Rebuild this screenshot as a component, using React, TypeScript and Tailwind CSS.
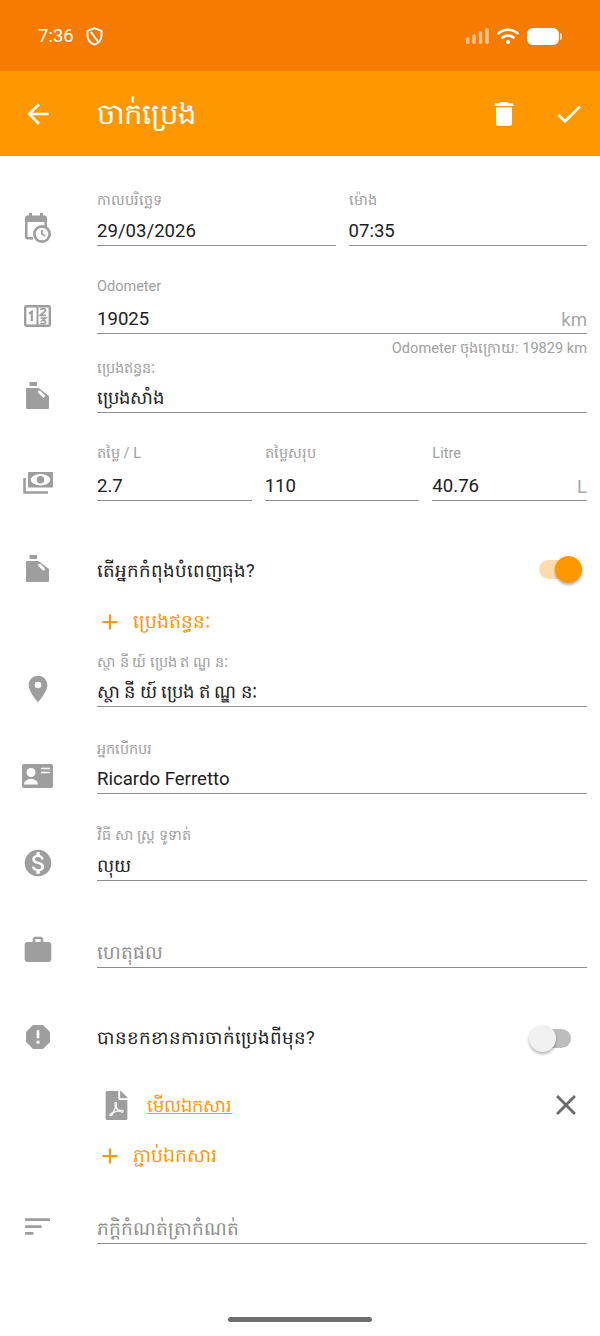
import { ReactNode } from 'react'
import { FaFilePdf } from 'react-icons/fa'
import {
  MdAdd,
  MdArrowBack,
  MdCheck,
  MdClose,
  MdDelete,
  MdMonetizationOn,
  MdPlace,
  MdReport,
  MdSort,
  MdWork,
} from 'react-icons/md'

const FONT = "font-['Roboto','Noto_Sans',sans-serif]"

function OilIcon() {
  return (
    <svg width="23" height="27" viewBox="0 0 23 27" fill="#9e9e9e">
      <rect x="3.500" y="0" width="7.500" height="4" />
      <path d="M1 6h11.500l10.500 8v12c0 .6-.4 1-1 1H1c-.6 0-1-.4-1-1V7c0-.6.4-1 1-1z" />
      <path d="M13.500 10l4 4" stroke="#fff" strokeWidth="3" strokeLinecap="round" />
    </svg>
  )
}

function CalendarClockIcon() {
  return (
    <svg width="27" height="30" viewBox="0 0 27 30">
      <path
        fill="#9e9e9e"
        d="M5 0h3v2.500h8V0h3v2.500h1.500C21.900 2.500 23 3.600 23 5v10h-2.500V9h-17v15H9v2.500H3.500C2.100 26.500 1 25.400 1 24V5c0-1.400 1.100-2.500 2.500-2.500H5z"
      />
      <circle cx="18" cy="21" r="9" fill="#9e9e9e" />
      <circle cx="18" cy="21" r="6.300" fill="#fff" />
      <path d="M17 17h1.800v3.700l2.800 1.700-.9 1.400-3.700-2.300z" fill="#9e9e9e" />
    </svg>
  )
}

function OdometerIcon() {
  return (
    <svg width="27" height="22" viewBox="0 0 27 22" fill="none" stroke="#9e9e9e">
      <rect x="1.200" y="1.200" width="24.600" height="19.600" rx="1.500" strokeWidth="2.400" />
      <path d="M13.500 1v20" strokeWidth="2" />
      <path d="M5 8.500l2.800-1.800V16" strokeWidth="2.200" />
      <path d="M16.500 5c.5-2 5-2 5 .3 0 1.700-3.500 3-5 5h5.500" strokeWidth="1.700" />
      <path d="M16.500 13h5l-3 2.500c2.500-.3 3.500 1 3 2.200-.5 1.300-3.800 1.300-5 .3" strokeWidth="1.700" />
    </svg>
  )
}

function MoneyIcon() {
  return (
    <svg width="30" height="22" viewBox="0 0 30 22">
      <rect x="5" y="0" width="25" height="15.500" fill="#9e9e9e" />
      <ellipse cx="17.500" cy="7.700" rx="9.800" ry="5.700" fill="#fff" />
      <circle cx="17.500" cy="7.700" r="3.800" fill="#9e9e9e" />
      <path d="M1.500 6v14.500H25" fill="none" stroke="#9e9e9e" strokeWidth="2.600" />
    </svg>
  )
}

function DriverIcon() {
  return (
    <svg width="31" height="24" viewBox="0 0 31 24">
      <rect x="0" y="0" width="31" height="24" rx="2" fill="#9e9e9e" />
      <circle cx="9" cy="8.500" r="4.500" fill="#fff" />
      <path d="M2 20.500c0-3.800 4-5.500 7-5.500s7 1.700 7 5.500z" fill="#fff" />
      <path d="M19 4.500h9M19 8.500h9" stroke="#fff" strokeWidth="1.600" />
    </svg>
  )
}

function StatusIcons() {
  return (
    <div className="flex items-center gap-[8px]">
      <svg width="23" height="16" viewBox="0 0 23 16" fill="#ffc48a">
        <rect x="0" y="9" width="3.500" height="7" rx="1.700" />
        <rect x="6.300" y="6" width="3.500" height="10" rx="1.700" />
        <rect x="12.800" y="3" width="3.500" height="13" rx="1.700" />
        <rect x="19.300" y="0" width="3.500" height="16" rx="1.700" />
      </svg>
      <svg width="22" height="16" viewBox="0 0 22 16" fill="none" stroke="#fff" strokeWidth="2.600" strokeLinecap="round">
        <path d="M1.500 5.300c5.500-4.800 13.500-4.800 19 0" />
        <path d="M5.500 9.600c3.200-2.700 7.800-2.700 11 0" />
        <circle cx="11" cy="14" r="2" fill="#fff" stroke="none" />
      </svg>
      <div className="flex items-center">
        <div className="w-[32px] h-[17px] rounded-[6px] bg-white" />
        <div className="w-[2px] h-[7px] ml-[1px] rounded-r-sm bg-[#ffd9b3]" />
      </div>
    </div>
  )
}

type FieldProps = {
  label?: string
  value?: string
  placeholder?: string
  suffix?: string
  labelGap?: string
  valueSize?: string
  className?: string
}

function Field({ label, value, placeholder, suffix, labelGap = 'mb-[5px]', valueSize = 'text-[18.6px]', className = '' }: FieldProps) {
  return (
    <div className={`flex flex-col justify-end min-w-0 ${className}`}>
      {label && <div className={`text-[14.5px] leading-[20px] text-[#a0a0a0] ${labelGap}`}>{label}</div>}
      <div className="flex items-end justify-between h-[30px] border-b border-[#8e8e8e]">
        {placeholder ? (
          <span className="text-[18.6px] leading-[28px] text-[#8f8f8f]">{placeholder}</span>
        ) : (
          <span className={`${valueSize} leading-[28px] text-[#212121]`}>{value}</span>
        )}
        {suffix && <span className="text-[18.6px] leading-[26px] text-[#a8a8a8]">{suffix}</span>}
      </div>
    </div>
  )
}

function Row({ icon, children, className = '' }: { icon?: ReactNode; children: ReactNode; className?: string }) {
  return (
    <div className={`flex items-end pr-[13px] ${className}`}>
      <div className="w-[75px] h-[34px] mb-[1px] flex items-center justify-center shrink-0">{icon}</div>
      <div className="w-[22px] shrink-0" />
      <div className="flex-1 min-w-0">{children}</div>
    </div>
  )
}

function AddButton({ label, className = '' }: { label: string; className?: string }) {
  return (
    <div className={`flex items-center pl-[97px] h-[34px] text-[#ff9800] ${className}`}>
      <MdAdd size={26} />
      <span className="ml-[10px] text-[19px]">{label}</span>
    </div>
  )
}

function Toggle({ on }: { on: boolean }) {
  return (
    <div className="relative w-[53px] h-[27px] mr-[5px] shrink-0">
      <div
        className={
          on
            ? 'absolute left-[10px] top-[4px] w-[40px] h-[19px] rounded-full bg-[#ffdcae]'
            : 'absolute left-[2px] top-[4px] w-[40px] h-[19px] rounded-full bg-[#bdbdbd]'
        }
      />
      <div
        className={
          on
            ? 'absolute right-0 top-0 w-[27px] h-[27px] rounded-full bg-[#ff9800] shadow-[0_2px_3px_rgba(0,0,0,0.3)]'
            : 'absolute left-0 top-0 w-[27px] h-[27px] rounded-full bg-[#f1f1f1] shadow-[0_2px_3px_rgba(0,0,0,0.3)]'
        }
      />
    </div>
  )
}

export default function App() {
  return (
    <div className={`relative w-[600px] h-[1336px] bg-white overflow-hidden ${FONT}`}>
      {/* status bar */}
      <div className="h-[71px] bg-[#f57c00] flex items-center justify-between pl-[38px] pr-[38px] pt-[1px]">
        <div className="flex items-center gap-[12px] text-white text-[18.5px]">
          <span className="pt-[2px]">7:36</span>
          <svg width="17" height="19" viewBox="0 0 17 19" fill="none" stroke="#fff" strokeWidth="1.900">
            <path d="M8.500 1.200L1.500 3.800v5c0 4 3 7.300 7 8.900 4-1.600 7-4.900 7-8.900v-5z" />
            <path d="M5 5l6.500 9" />
          </svg>
        </div>
        <StatusIcons />
      </div>

      {/* toolbar */}
      <div className="h-[85px] bg-[#ff9800] flex items-center text-white">
        <div className="w-[76px] flex justify-center">
          <MdArrowBack size={32} />
        </div>
        <div className="ml-[21px] flex-1 text-[29px] leading-none pt-[1px]">ចាក់ប្រេង</div>
        <MdDelete size={32} className="mr-[33px]" />
        <MdCheck size={32} className="mr-[15px]" />
      </div>

      {/* form */}
      <Row icon={<CalendarClockIcon />} className="mt-[35px]">
        <div className="flex gap-[13px]">
          <Field label="កាលបរិច្ឆេទ" value="29/03/2026" className="flex-1" />
          <Field label="ម៉ោង" value="07:35" className="flex-1" />
        </div>
      </Row>

      <Row icon={<OdometerIcon />} className="mt-[31px]">
        <Field label="Odometer" value="19025" suffix="km" labelGap="mb-[7px]" />
      </Row>
      <div className="mt-[6px] pr-[13px] text-right text-[14.6px] leading-[16px] text-[#a0a0a0]">Odometer ចុងក្រោយ: 19829 km</div>

      <Row icon={<OilIcon />} className="mt-[3px]">
        <Field label="ប្រេងឥន្ធនៈ" value="ប្រេងសាំង" valueSize="text-[18px]" labelGap="mb-[4px]" />
      </Row>

      <Row icon={<MoneyIcon />} className="mt-[31px]">
        <div className="flex gap-[13px]">
          <Field label="តម្លៃ / L" value="2.7" className="flex-1" labelGap="mb-[7px]" />
          <Field label="តម្លៃសរុប" value="110" className="flex-1" labelGap="mb-[7px]" />
          <Field label="Litre" value="40.76" suffix="L" className="flex-1" labelGap="mb-[7px]" />
        </div>
      </Row>

      <Row icon={<OilIcon />} className="mt-[50px]">
        <div className="flex items-center justify-between h-[34px] text-[18.3px] text-[#212121]">
          <span className="pt-[3px]">តើអ្នកកំពុងបំពេញធុង?</span>
          <Toggle on />
        </div>
      </Row>

      <AddButton label="ប្រេងឥន្ធនៈ" className="mt-[19px]" />

      <Row icon={<MdPlace size={32} color="#9e9e9e" />} className="mt-[14px]">
        <Field label="ស្ថា នី យ៍ ប្រេង ឥ ណ្ឌ នៈ" value="ស្ថា នី យ៍ ប្រេង ឥ ណ្ឌ នៈ" valueSize="text-[18px]" labelGap="mb-[4px]" />
      </Row>

      <Row icon={<DriverIcon />} className="mt-[33px]">
        <Field label="អ្នកបើកបរ" value="Ricardo Ferretto" labelGap="mb-[4px]" />
      </Row>

      <Row icon={<MdMonetizationOn size={32} color="#9e9e9e" />} className="mt-[32px]">
        <Field label="វិធី សា ស្ត្រ ទូទាត់" value="លុយ" valueSize="text-[18px]" />
      </Row>

      <Row icon={<MdWork size={32} color="#9e9e9e" />} className="mt-[52px]">
        <Field placeholder="ហេតុផល" />
      </Row>

      <Row icon={<MdReport size={32} color="#9e9e9e" />} className="mt-[52px]">
        <div className="flex items-center justify-between h-[34px] text-[18.3px] text-[#212121]">
          <span>បានខកខានការចាក់ប្រេងពីមុន?</span>
          <Toggle on={false} />
        </div>
      </Row>

      <div className="mt-[33px] flex items-center pl-[102px] pr-[17px] h-[34px]">
        <FaFilePdf size={29} color="#9e9e9e" />
        <span className="ml-[16px] text-[18px] text-[#ff9800] underline">មើលឯកសារ</span>
        <MdClose size={34} color="#6b6b6b" className="ml-auto" />
      </div>

      <AddButton label="ភ្ជាប់ឯកសារ" className="mt-[17px]" />

      <Row icon={<MdSort size={33} color="#9e9e9e" />} className="mt-[36px]">
        <Field placeholder="ភក្តិកំណត់ត្រាកំណត់" />
      </Row>

      {/* home indicator */}
      <div className="absolute left-[228px] bottom-[14px] w-[144px] h-[5px] rounded-full bg-[#6e6e6e]" />
    </div>
  )
}
